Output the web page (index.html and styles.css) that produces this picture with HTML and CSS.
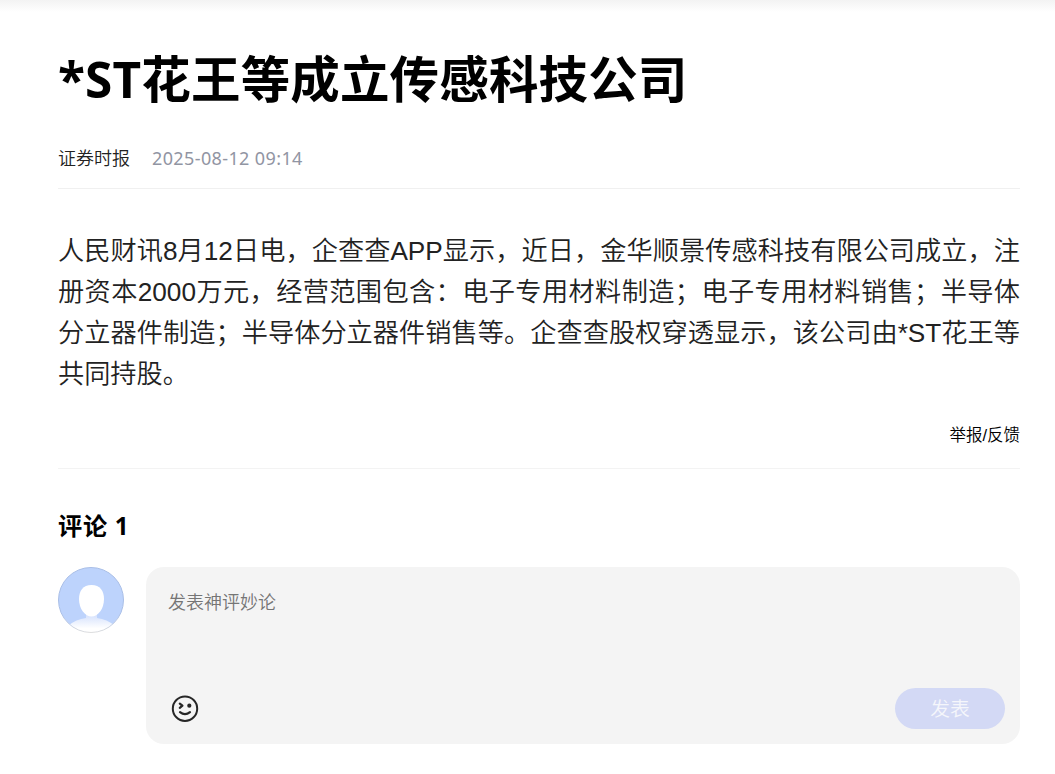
FILE: index.html
```html
<!DOCTYPE html>
<html lang="zh-CN">
<head>
  <meta charset="UTF-8" />
  <title>*ST花王等成立传感科技公司</title>
  <link rel="stylesheet" href="styles.css">
</head>
<body>

  <div class="top-shadow"></div>

  <div class="container">
    <h1>*ST花王等成立传感科技公司</h1>

    <div class="meta">
      <span class="author">证券时报</span>
      <span class="time">2025-08-12 09:14</span>
    </div>

    <p class="article">人民财讯8月12日电，企查查APP显示，近日，金华顺景传感科技有限公司成立，注册资本2000万元，经营范围包含：电子专用材料制造；电子专用材料销售；半导体分立器件制造；半导体分立器件销售等。企查查股权穿透显示，该公司由*ST花王等共同持股。</p>

    <div class="report"><span>举报/反馈</span></div>

    <h2>评论 1</h2>

    <div class="comment">
      <svg class="avatar" viewBox="0 0 66 66">
        <defs>
          <clipPath id="face"><circle cx="33" cy="33" r="32.5" /></clipPath>
          <linearGradient id="body" x1="0" y1="0" x2="0" y2="1">
            <stop offset="0" stop-color="#cfddfc" />
            <stop offset="0.7" stop-color="#fff" />
          </linearGradient>
          <linearGradient id="ring" x1="0" y1="0" x2="0" y2="1">
            <stop offset="0.7" stop-color="#a9bee6" />
            <stop offset="1" stop-color="#dedede" />
          </linearGradient>
        </defs>
        <g clip-path="url(#face)">
          <rect width="66" height="66" fill="#bdd3fc" />
          <path d="M10 59Q18 52 28 51V46H39V51Q49 52 57 59V68H10Z" fill="url(#body)" />
          <path d="M33.500 18C42 18 46 24 46 32C46 42 40 49.500 33.500 49.500C27 49.500 21 42 21 32C21 24 25 18 33.500 18Z" fill="#fff" />
        </g>
        <circle cx="33" cy="33" r="32.5" fill="none" stroke="url(#ring)" />
      </svg>

      <div class="comment-box">
        <textarea placeholder="发表神评妙论"></textarea>
        <div class="tools">
          <svg class="emoji" viewBox="0 0 28 28" fill="none" stroke="#262626" stroke-linecap="round" stroke-linejoin="round">
            <circle cx="14" cy="13.700" r="12.200" stroke-width="2" />
            <path d="M8.800 8.600L11.400 10.700L8.800 12.800" stroke-width="2.200" />
            <circle cx="18.300" cy="10.700" r="2.100" fill="#262626" stroke="none" />
            <path d="M9 17.100Q14 21.200 19 17.100" stroke-width="2.200" />
          </svg>
          <button type="button">发表</button>
        </div>
      </div>
    </div>
  </div>

</body>
</html>
```
FILE: styles.css
```css
* {
  box-sizing: border-box;
}

body {
  margin: 0;
  background: #fff;
  color: #000;
  font-family: "Open Sans", "Noto Sans CJK SC", sans-serif;
}

.top-shadow {
  height: 12px;
  background: linear-gradient(#f3f3f3, #fff);
}

.container {
  width: 962px;
  margin-left: 58px;
}

h1 {
  margin: 0;
  padding-top: 32px;
  font-size: 49.5px;
  line-height: 70px;
  font-weight: 700;
  letter-spacing: 0.15px;
  white-space: nowrap;
}

.meta {
  display: flex;
  align-items: center;
  gap: 22px;
  height: 75px;
  padding-top: 14px;
  border-bottom: 1px solid #f0f0f0;
  font-size: 18px;
  line-height: 30px;
}

.author {
  color: #222;
  font-weight: 350;
}

.time {
  color: #9195a3;
  font-family: "Noto Sans", sans-serif;
  font-size: 18px;
  letter-spacing: 0.38px;
}

.article {
  margin: 42px 0 0;
  color: #222;
  font-family: "Liberation Sans", "Noto Sans CJK SC", sans-serif;
  font-size: 26.2px;
  line-height: 41px;
  font-weight: 350;
  text-align: justify;
}

.report {
  height: 74px;
  padding-top: 27px;
  border-bottom: 1px solid #f3f3f3;
  font-family: "Liberation Sans", "Noto Sans CJK SC", sans-serif;
  font-size: 16.5px;
  line-height: 26px;
  font-weight: 350;
  text-align: right;
}

h2 {
  margin: 38px 0 22px;
  font-size: 24.2px;
  line-height: 38px;
  font-weight: 700;
  letter-spacing: 0.7px;
}

.comment {
  display: flex;
  gap: 22px;
}

.avatar {
  width: 66px;
  height: 66px;
}

.comment-box {
  display: flex;
  flex-direction: column;
  justify-content: space-between;
  flex: 1;
  height: 177px;
  padding: 19px 15px 15px 22px;
  border-radius: 18px;
  background: #f4f4f4;
}

textarea {
  display: block;
  height: 80px;
  padding: 0;
  border: none;
  outline: none;
  resize: none;
  background: transparent;
  font-family: "Noto Sans CJK SC", sans-serif;
  font-size: 18px;
  line-height: 30px;
  font-weight: 350;
}

textarea::placeholder {
  color: #757575;
}

.tools {
  display: flex;
  align-items: center;
  justify-content: space-between;
}

.emoji {
  width: 28px;
  height: 28px;
  margin-left: 3px;
}

button {
  width: 110px;
  height: 41px;
  padding: 0 0 2px;
  border: none;
  border-radius: 21px;
  background: #d3d9f5;
  color: #f5f6fb;
  font-family: "Noto Sans CJK SC", sans-serif;
  font-size: 19.8px;
  font-weight: 350;
}
```
